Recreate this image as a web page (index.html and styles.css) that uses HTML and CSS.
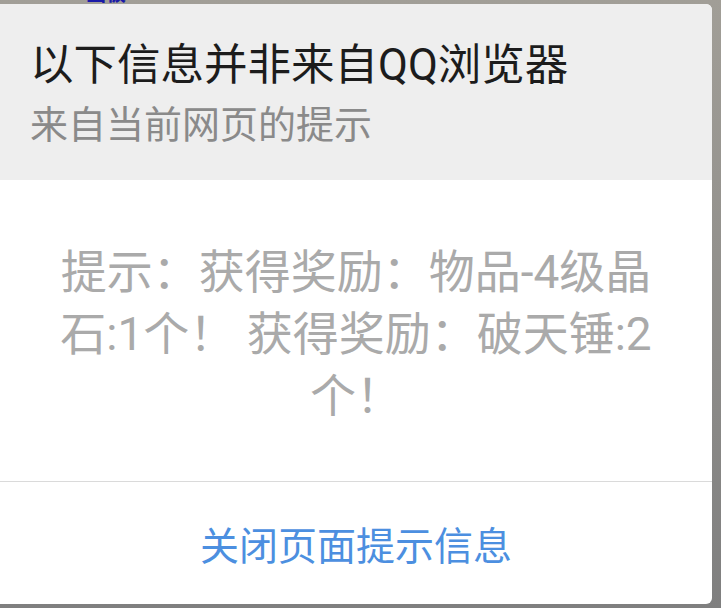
FILE: index.html
```html
<!DOCTYPE html>
<html lang="zh-CN">
<head>
    <meta charset="UTF-8">
    <meta name="viewport" content="width=device-width, initial-scale=1.0">
    <title>来自当前网页的提示</title>
    <link rel="stylesheet" href="styles.css">
</head>
<body>
    <div class="topbar">
        <span class="topbar-text">画板</span>
    </div>

    <div class="dialog">
        <div class="dialog-header">
            <div class="dialog-title">以下信息并非来自QQ浏览器</div>
            <div class="dialog-subtitle">来自当前网页的提示</div>
        </div>

        <div class="dialog-body">
            提示：获得奖励：物品-4级晶石:1个！ 获得奖励：破天锤:2个！
        </div>

        <button class="dialog-button" type="button">关闭页面提示信息</button>
    </div>
</body>
</html>
```

FILE: styles.css
```css
body {
    margin: 0;
    padding: 0;
    height: 608px;
    overflow: hidden;
    font-family: "Roboto", "Noto Sans CJK SC", sans-serif;
    background: linear-gradient(#a19e97, #7f7f7f);
}

.topbar {
    height: 4px;
    overflow: hidden;
    padding-left: 86px;
}

.topbar-text {
    display: block;
    margin-top: -16px;
    font-size: 20px;
    line-height: 20px;
    font-weight: bold;
    color: #1a1aa8;
}

.dialog {
    width: 712px;
    height: 600px;
    background-color: #fff;
    border-radius: 0 6px 6px 0;
    overflow: hidden;
    display: flex;
    flex-direction: column;
}

.dialog-header {
    background-color: #eeeeee;
    height: 176px;
    box-sizing: border-box;
    padding: 37px 30px 0;
}

.dialog-title {
    font-size: 43.5px;
    line-height: 50px;
    color: #1c1c1c;
}

.dialog-subtitle {
    margin-top: 11px;
    font-size: 38px;
    line-height: 46px;
    color: #8a8a8a;
}

.dialog-body {
    height: 302px;
    box-sizing: border-box;
    padding: 61px 48px 0;
    font-size: 46px;
    line-height: 62px;
    color: #aaaaaa;
    text-align: center;
    border-bottom: 1px solid #dadada;
}

.dialog-button {
    flex: 1;
    border: none;
    background: none;
    padding: 0;
    font-family: inherit;
    font-size: 39px;
    color: #4c8fe0;
    cursor: pointer;
}
```
